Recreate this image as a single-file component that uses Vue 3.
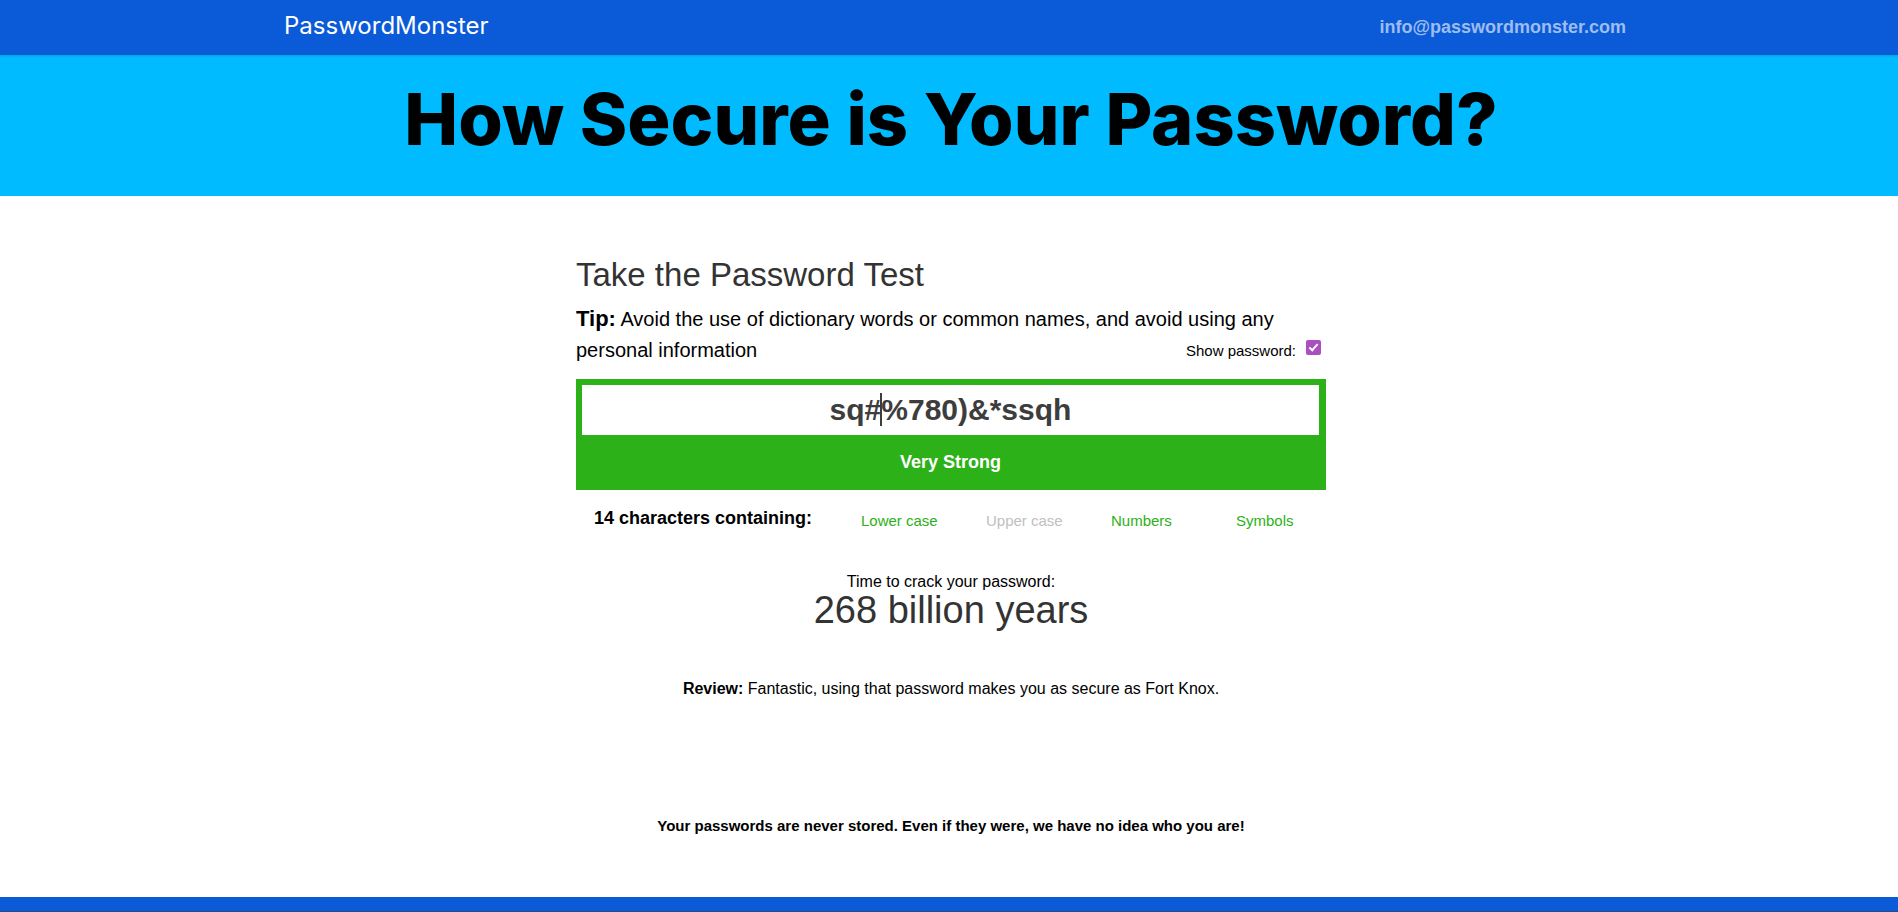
<script setup>
import { ref, computed } from 'vue'

const password = ref('sq#%780)&*ssqh')
const shown = ref(true)
const kinds = computed(() => [
  { label: 'Lower case', on: /[a-z]/.test(password.value) },
  { label: 'Upper case', on: /[A-Z]/.test(password.value) },
  { label: 'Numbers', on: /[0-9]/.test(password.value) },
  { label: 'Symbols', on: /[^a-zA-Z0-9]/.test(password.value) },
])
</script>

<template>
  <div class="page">
    <header class="topbar">
      <div class="bar-inner">
        <a class="brand" href="#">PasswordMonster</a>
        <a class="mail" href="mailto:info@passwordmonster.com">info@passwordmonster.com</a>
      </div>
    </header>
    <div class="hero">
      <h1>How Secure is Your Password?</h1>
    </div>
    <main class="content">
      <h2>Take the Password Test</h2>
      <div class="tip">
        <strong>Tip:</strong> Avoid the use of dictionary words or common names, and avoid using any personal information
        <span class="toggle">
          <label for="show">Show password:</label>
          <input id="show" v-model="shown" type="checkbox" />
        </span>
      </div>
      <div class="meter">
        <div class="field">
          <input v-model="password" :type="shown ? 'text' : 'password'" aria-label="Password" />
          <span class="caret"></span>
        </div>
        <div class="strength">Very Strong</div>
      </div>
      <div class="makeup">
        <strong>{{ password.length }} characters containing:</strong>
        <span v-for="k in kinds" :key="k.label" class="kind" :class="{ on: k.on }">{{ k.label }}</span>
      </div>
      <div class="time-label">Time to crack your password:</div>
      <div class="time">268 billion years</div>
      <p class="review"><strong>Review:</strong> Fantastic, using that password makes you as secure as Fort Knox.</p>
      <p class="privacy">Your passwords are never stored. Even if they were, we have no idea who you are!</p>
    </main>
    <footer class="footer"></footer>
  </div>
</template>

<style>
body {
  margin: 0;
  background: #fff;
}
</style>

<style scoped>
.page {
  box-sizing: border-box;
  min-height: 100vh;
  display: flex;
  flex-direction: column;
  font-family: "Liberation Sans", Arial, sans-serif;
  font-size: 16px;
  color: #000;
}
.topbar {
  position: relative;
  background: #0b5ad8;
  box-shadow: 0 1px 2px rgba(0, 0, 0, 0.15);
}
.bar-inner {
  box-sizing: border-box;
  width: 100%;
  max-width: 1354px;
  height: 55px;
  margin: 0 auto;
  padding-left: 12px;
  display: flex;
  justify-content: space-between;
  line-height: 52px;
}
.brand {
  font-family: Inter, "Liberation Sans", sans-serif;
  font-size: 24px;
  color: #fff;
  text-decoration: none;
}
.mail {
  font-size: 18px;
  font-weight: bold;
  line-height: 54px;
  color: #9dbdef;
  text-decoration: none;
}
.hero {
  background: #00bbff;
  height: 141px;
  padding-left: 4px;
  text-align: center;
}
h1 {
  margin: 0;
  font-family: Inter, "Liberation Sans", sans-serif;
  font-size: 72px;
  font-weight: 800;
  line-height: 128px;
}
.content {
  box-sizing: border-box;
  width: 100%;
  max-width: 754px;
  margin: 0 auto;
  padding: 57px 0 0 4px;
}
h2 {
  margin: 0;
  font-size: 33px;
  font-weight: normal;
  line-height: 44px;
  color: #333;
}
.tip {
  padding-top: 6px;
  font-size: 20px;
  line-height: 31px;
}
.tip strong {
  font-size: 22px;
}
.toggle {
  float: right;
  display: flex;
  gap: 10px;
  margin-right: 5px;
  font-size: 15px;
}
.toggle input {
  appearance: none;
  width: 15px;
  height: 15px;
  margin: 5px 0 0;
  border-radius: 2px;
  background: #a94fc0;
  position: relative;
}
.toggle input:checked::after {
  content: "";
  position: absolute;
  left: 5px;
  top: 2px;
  width: 3px;
  height: 7px;
  border: solid #fff;
  border-width: 0 2px 2px 0;
  transform: rotate(42deg);
}
.meter {
  margin-top: 13px;
  padding: 6px 7px 0 6px;
  background: #2cb118;
}
.field {
  position: relative;
}
.field input {
  display: block;
  box-sizing: border-box;
  width: 100%;
  height: 50px;
  padding: 0;
  border: 0;
  outline: 0;
  background: #fff;
  color: #3d3d3d;
  text-align: center;
  font-family: inherit;
  font-size: 30px;
  font-weight: bold;
}
.caret {
  position: absolute;
  left: calc(50% - 71px);
  top: 8px;
  width: 2px;
  height: 33px;
  background: #3d3d3d;
}
.strength {
  height: 55px;
  line-height: 54px;
  text-align: center;
  font-size: 18px;
  font-weight: bold;
  color: #fff;
}
.makeup {
  display: grid;
  grid-template-columns: 267px repeat(3, 125px) auto;
  padding-left: 18px;
  margin-top: 16px;
  line-height: 24px;
  font-size: 15px;
}
.makeup strong {
  font-size: 18px;
}
.kind {
  padding-top: 3px;
  color: #c0c0c0;
}
.kind.on {
  color: #2cb118;
}
.time-label {
  margin-top: 39px;
  line-height: 20px;
  text-align: center;
}
.time {
  text-align: center;
  font-size: 38px;
  line-height: 36px;
  color: #333;
}
.review {
  margin: 49px 0 0;
  text-align: center;
  line-height: 24px;
}
.privacy {
  margin: 115px 0 0;
  text-align: center;
  font-size: 15px;
  font-weight: bold;
  line-height: 20px;
}
.footer {
  box-sizing: border-box;
  height: 15px;
  margin-top: auto;
  background: #0b5ad8;
  border-bottom: 1px solid #2d4a7a;
}
</style>
